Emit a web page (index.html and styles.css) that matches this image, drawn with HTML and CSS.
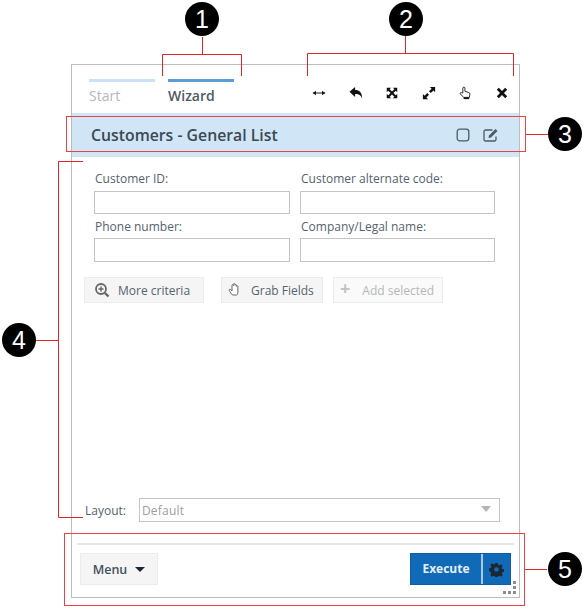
FILE: index.html
```html
<!DOCTYPE html>
<html lang="en">
<head>
  <meta charset="UTF-8">
  <title>Customers - General List</title>
  <link rel="stylesheet" href="styles.css">
</head>
<body>
<div class="stage">
  <div class="panel">
    <div class="topbar">
      <div class="tabs">
        <div class="tab">Start</div>
        <div class="tab active">Wizard</div>
      </div>
      <div class="tools">
        <svg class="tool" viewBox="0 0 16 16"><path d="M1 8h14" stroke="#111" stroke-width="1.100"/><path d="M4.500 5.300 1 8l3.500 2.700zM11.500 5.300 15 8l-3.500 2.700z" fill="#111"/></svg>
        <svg class="tool" viewBox="0 0 16 16"><path d="M.5 6.500 7 1v3.500c4.800 0 8 2.500 8 10-1.300-4-3.500-5.500-8-5.500v3.500z" fill="#111"/></svg>
        <svg class="tool" viewBox="0 0 16 16"><path d="M2 2h5L5.300 3.700 8 6.400 10.700 3.700 9 2h5v5l-1.700-1.700L9.600 8l2.700 2.700L14 9v5H9l1.700-1.700L8 9.600l-2.700 2.700L7 14H2V9l1.700 1.700L6.400 8 3.700 5.300 2 7z" fill="#111"/></svg>
        <svg class="tool" viewBox="0 0 16 16"><path d="M15 1v6l-2-2-3 3-2-2 3-3-2-2zM1 15V9l2 2 3-3 2 2-3 3 2 2z" fill="#111"/></svg>
        <svg class="tool" viewBox="0 0 16 16"><path d="M5.500 8V2.500a1.200 1.200 0 0 1 2.400 0V6l4.600 1.500c.8.300 1.200.9 1.100 1.700l-.6 3.800H6.500L2.800 9.200c-.9-1 .4-2.400 1.500-1.500z" fill="#fff" stroke="#111" stroke-width="1"/><path d="M6.500 13h6.300v2H6.500z" fill="#111"/></svg>
        <svg class="tool" viewBox="0 0 16 16"><path d="M3.200 3.200l9.600 9.600M12.800 3.200l-9.600 9.600" stroke="#111" stroke-width="3.200"/></svg>
      </div>
    </div>

    <div class="title-bar">
      <div class="title">Customers - General List</div>
      <svg class="title-icon" viewBox="0 0 16 16"><rect x="2.200" y="2.200" width="11.600" height="11.600" rx="2.500" fill="none" stroke="#4a5b68" stroke-width="1.300"/></svg>
      <svg class="title-icon" viewBox="0 0 16 16"><path d="M13 9.500V12.500a1.500 1.500 0 0 1-1.500 1.500h-9A1.500 1.500 0 0 1 1 12.500v-8A1.500 1.500 0 0 1 2.500 3h7" fill="none" stroke="#4a5b68" stroke-width="1.300"/><path d="M6 8.500 12.500 2l2 2L8 10.500l-2.500.5z" fill="#4a5b68"/></svg>
    </div>

    <div class="form">
      <div class="field">
        <label>Customer ID:</label>
        <div class="input"></div>
      </div>
      <div class="field">
        <label>Customer alternate code:</label>
        <div class="input"></div>
      </div>
      <div class="field">
        <label>Phone number:</label>
        <div class="input"></div>
      </div>
      <div class="field">
        <label>Company/Legal name:</label>
        <div class="input"></div>
      </div>
    </div>

    <div class="actions">
      <div class="btn more">
        <svg class="btn-icon" viewBox="0 0 16 16"><circle cx="7" cy="7" r="5" fill="none" stroke="#666" stroke-width="1.800"/><path d="M11 11l3.500 3.500" stroke="#666" stroke-width="2.400"/><path d="M7 4.500v5M4.500 7h5" stroke="#666" stroke-width="1.500"/></svg>
        More criteria
      </div>
      <div class="btn grab">
        <svg class="btn-icon" viewBox="0 0 16 16"><path d="M4.500 12 2.300 8.500c-.6-1 .6-1.800 1.400-1L5 9V3.500c0-1 1.300-1 1.400 0V2.300c0-1 1.500-1 1.500 0v1c0-.9 1.500-.9 1.500 0v1c0-.8 1.500-.8 1.500 0V10c0 1.500-.5 2.200-1 3H5.500z" fill="#fff" stroke="#666" stroke-width="1"/></svg>
        Grab Fields
      </div>
      <div class="btn add">
        <span class="plus">+</span>
        Add selected
      </div>
    </div>

    <div class="layout-row">
      <span class="layout-label">Layout:</span>
      <div class="select">
        Default
        <span class="arrow"></span>
      </div>
    </div>

    <div class="footer">
      <div class="menu-btn">Menu <span class="caret"></span></div>
      <div class="execute">
        <span class="execute-text">Execute</span>
        <span class="execute-gear">
          <svg viewBox="0 0 16 16" width="15" height="15"><path d="M6.700 1h2.600l.4 2 1.300.6 1.800-1.100 1.800 1.800-1.100 1.800.6 1.300 1.900.4v2.600l-1.900.4-.6 1.300 1.100 1.800-1.800 1.800-1.800-1.100-1.300.6-.4 1.900H6.700l-.4-1.900-1.300-.6-1.800 1.100-1.800-1.800 1.100-1.800-.6-1.300L0 9.300V6.700l1.900-.4.6-1.300-1.100-1.800 1.800-1.800L5 2.500l1.300-.5zM8 5.500a2.500 2.500 0 1 0 0 5 2.500 2.500 0 0 0 0-5z" fill="#1c2733" fill-rule="evenodd"/></svg>
        </span>
      </div>
      <div class="grip">
        <i></i><i></i><i></i><i></i><i></i>
      </div>
    </div>
  </div>

  <!-- callouts drawn over the screenshot -->
  <svg class="marks" width="585" height="611">
    <g fill="none" stroke="#e0252c" stroke-width="1">
      <path d="M202.500 37v17.500M162.500 76V54.500h79V76"/>
      <path d="M405.500 36v17.500M307.500 76V53.500h206V76"/>
      <path d="M526 134.500h22"/>
      <path d="M83 161.500H58.500v356H83M36 340.500h22"/>
      <path d="M525 569.500h22"/>
    </g>
    <g fill="none" stroke="#ee4146" stroke-width="1">
      <rect x="66.500" y="116.500" width="459" height="35"/>
      <rect x="64.500" y="533.500" width="460" height="72"/>
    </g>
    <g fill="#000">
      <circle cx="202" cy="19" r="17"/>
      <circle cx="406" cy="19" r="17"/>
      <circle cx="565" cy="134" r="17"/>
      <circle cx="19" cy="340" r="17"/>
      <circle cx="565" cy="569" r="17"/>
    </g>
    <g class="mark-num" fill="#fff" text-anchor="middle">
      <text x="202" y="28">1</text>
      <text x="406" y="28">2</text>
      <text x="565" y="143">3</text>
      <text x="19" y="349">4</text>
      <text x="565" y="578">5</text>
    </g>
  </svg>
</div>
</body>
</html>
```

FILE: styles.css
```css
* {
  box-sizing: border-box;
  margin: 0;
  padding: 0;
}

body {
  background: #fff;
  font-family: "Open Sans", "Liberation Sans", sans-serif;
  color: #4d5a65;
}

.stage {
  position: relative;
  width: 585px;
  height: 611px;
  padding: 64px 0 0 71px;
  overflow: hidden;
}

.panel {
  width: 449px;
  height: 534px;
  border: 1px solid #bdbdbd;
  display: flex;
  flex-direction: column;
}

.topbar {
  height: 48px;
  display: flex;
  justify-content: space-between;
  padding: 14px 0 0 17px;
}

.tabs {
  display: flex;
  gap: 13px;
}

.tab {
  width: 66px;
  height: 28px;
  border-top: 3px solid #c9e2f5;
  padding-top: 4px;
  font-size: 14px;
  line-height: 19px;
  color: #b4b8ba;
}

.tab.active {
  border-top-color: #5d9cd6;
  font-weight: 600;
  color: #4d5a65;
}

.tools {
  display: flex;
  gap: 22.600px;
  padding: 7px 10px 0 0;
}

.tool {
  width: 14px;
  height: 14px;
}

.title-bar {
  height: 44px;
  background: #d0e6f6;
  display: flex;
  align-items: center;
  padding: 0 20px 0 19px;
  gap: 12px;
}

.title {
  flex: 1;
  font-size: 15.800px;
  font-weight: 600;
  color: #3c4852;
}

.title-icon {
  width: 16px;
  height: 16px;
}

.form {
  display: grid;
  grid-template-columns: 196px 195px;
  column-gap: 10px;
  padding: 12px 0 0 22px;
}

.field label {
  display: block;
  height: 21.500px;
  padding-left: 1px;
  font-size: 12px;
  line-height: 20px;
  color: #56626c;
}

.input {
  height: 23.500px;
  margin-bottom: 2.500px;
  border: 1px solid #c4c4c4;
  background: #fff;
}

.actions {
  display: flex;
  padding: 13px 0 0 12px;
}

.btn {
  height: 26px;
  display: flex;
  align-items: center;
  background: #f5f5f5;
  border: 1px solid #ececec;
  font-size: 12px;
  color: #56626c;
}

.btn-icon {
  width: 16px;
  height: 16px;
}

.more {
  width: 120px;
  padding-left: 9px;
  gap: 8px;
}

.grab {
  width: 102px;
  margin-left: 17px;
  padding-left: 5px;
  gap: 8px;
}

.add {
  width: 110px;
  margin-left: 10px;
  padding-left: 6px;
  gap: 12px;
  background: #fafafa;
  color: #b4b8ba;
}

.plus {
  font-size: 18px;
  font-weight: 700;
  line-height: 16px;
  margin-top: -4px;
  color: #c4c4c4;
}

.layout-row {
  margin-top: auto;
  display: flex;
  align-items: center;
  padding-left: 13px;
  gap: 13px;
}

.layout-label {
  font-size: 12px;
  color: #56626c;
}

.select {
  position: relative;
  width: 361px;
  height: 24px;
  border: 1px solid #c4c4c4;
  padding-left: 2px;
  font-size: 12px;
  letter-spacing: 0.200px;
  line-height: 23px;
  color: #9a9ea1;
}

.arrow {
  position: absolute;
  right: 8px;
  top: 7px;
  border-left: 5px solid transparent;
  border-right: 5px solid transparent;
  border-top: 6px solid #b5b5b5;
}

.footer {
  position: relative;
  height: 54px;
  margin: 21px 5px 0;
  border-top: 2px solid #e6e6e6;
  display: flex;
  justify-content: space-between;
  padding: 8px 3px 0;
}

.menu-btn {
  width: 78px;
  height: 32px;
  background: #f5f5f5;
  border: 1px solid #ececec;
  display: flex;
  align-items: center;
  justify-content: center;
  gap: 8px;
  font-size: 12.500px;
  font-weight: 600;
  color: #44505b;
}

.caret {
  border-left: 5px solid transparent;
  border-right: 5px solid transparent;
  border-top: 5px solid #1c2733;
}

.execute {
  width: 101px;
  height: 32px;
  background: #116ab8;
  border: 1px solid #0e5ea6;
  display: flex;
  color: #fff;
  font-size: 12px;
  font-weight: 700;
}

.execute-text {
  width: 70px;
  text-align: center;
  line-height: 30px;
  color: #e4eef7;
}

.execute-gear {
  flex: 1;
  border-left: 2px solid #a9c8e4;
  display: flex;
  align-items: center;
  justify-content: center;
}

.grip {
  position: absolute;
  right: -2px;
  bottom: 2px;
  width: 14px;
  height: 14px;
}

.grip i {
  position: absolute;
  width: 3px;
  height: 3px;
  background: #8d8d8d;
}

.grip i:nth-child(1) { right: 0; top: 0; }
.grip i:nth-child(2) { right: 0; top: 5px; }
.grip i:nth-child(3) { right: 0; top: 10px; }
.grip i:nth-child(4) { right: 5px; top: 10px; }
.grip i:nth-child(5) { right: 10px; top: 10px; }

.marks {
  position: absolute;
  left: 0;
  top: 0;
  pointer-events: none;
}

.mark-num {
  font-family: "Liberation Sans", sans-serif;
  font-size: 25px;
}
```
